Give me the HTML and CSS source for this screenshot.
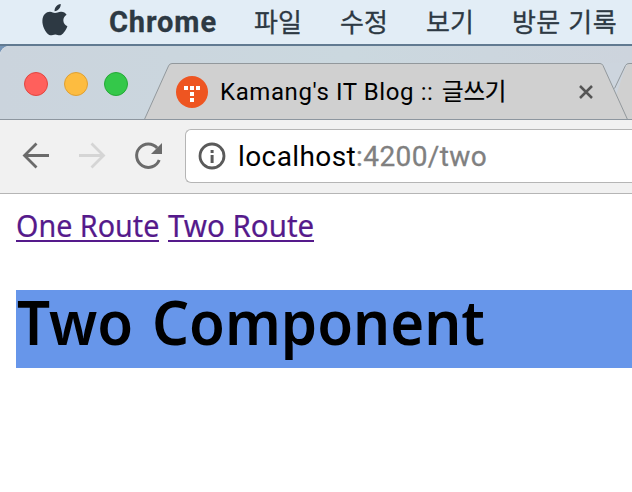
FILE: index.html
```html
<!DOCTYPE html>
<html lang="ko">
<head>
<meta charset="utf-8">
<title>Two Route</title>
<link rel="stylesheet" href="styles.css">
</head>
<body>
<nav class="menubar">
  <svg class="apple" width="28" height="34" viewBox="0 0 28 34"><path d="M13.6 9.2C13.3 5.8 16 2.5 19.7 2C20.1 5.6 17.1 9 13.6 9.2Z M14 11.1C16 11 17.6 9.6 20.4 9.8C22.6 9.9 24.4 10.9 25.6 12.7C20.8 15.5 21.5 22.1 26.4 24.2C25.3 27.2 22.8 31.4 20.2 33C17.8 34 16.7 32.5 14.3 32.5C11.9 32.5 10.5 34 8.3 33C4.3 30.4 1 23.8 1.4 18.2C1.8 12.6 5.4 9.7 9 9.8C11.1 9.9 12.5 11.1 14 11.1Z"/></svg>
  <span class="menu app">Chrome</span>
  <span class="menu file">파일</span>
  <span class="menu edit">수정</span>
  <span class="menu view">보기</span>
  <span class="menu history">방문 기록</span>
</nav>
<div class="window">
  <header class="tabs">
    <svg class="tab-shapes" width="632" height="74" viewBox="0 0 632 74"><path class="tab" d="M608 74L626 19.500Q627 17.500 629 17.500H640V74Z"/><path class="gap" d="M600 17H628L614.500 43Z"/><path class="edge" d="M614.500 42.500L625.500 19.500Q626.500 17.500 629 17.500H640"/><path class="tab" d="M144.200 74L168.500 20Q169.500 17.500 172 17.500H600Q602 17.500 603 19.500L627.500 73.500Z"/><path class="edge" d="M144.200 74L168.500 20Q169.500 17.500 172 17.500H600Q602 17.500 603 19.500L627.500 73.500"/><path class="base" d="M0 73.500H632"/></svg>
    <div class="lights"><i class="light red"></i><i class="light yellow"></i><i class="light green"></i></div>
    <svg class="favicon" width="32" height="32" viewBox="0 0 32 32"><circle cx="16" cy="16" r="16" fill="#ee5521"/><path fill="#fff" d="M8 10h4v4H8zM14 10h4v4h-4zM20 10h4v4h-4zM14 16h4v4h-4zM14 22h4v4h-4z"/></svg>
    <span class="tab-title">Kamang's IT Blog :: <span class="ko">글쓰기</span></span>
    <svg class="close" width="16" height="16" viewBox="0 0 16 16"><path d="M2 2L14 14M14 2L2 14"/></svg>
  </header>
  <div class="toolbar">
    <svg class="nav-icons" width="185" height="73" viewBox="0 0 185 73"><g fill="none" stroke-width="2.800"><path stroke="#6b6b6b" d="M49 35.500H25M36.500 23.500L24.500 35.500L36.500 47.500"/><path stroke="#d5d5d5" d="M79 35.500H103M91.500 23.500L103.500 35.500L91.500 47.500"/><path stroke="#6b6b6b" stroke-width="3" d="M157.200 28A11.700 11.700 0 1 0 159.200 40"/></g><path fill="#6b6b6b" d="M162 23V34H151Z"/></svg>
    <div class="address">
      <svg class="info" width="28" height="28" viewBox="0 0 28 28"><circle cx="14" cy="14" r="12" fill="none" stroke="#5a5a5a" stroke-width="2.800"/><path fill="#5a5a5a" d="M12.600 8h3v3h-3zM12.600 13h3v8h-3z"/></svg>
      <span class="url">localhost<span class="path">:4200/two</span></span>
    </div>
  </div>
  <main class="page">
    <div class="links"><a class="one" href="#one"><span>One Route</span></a><a class="two" href="#two"><span>Two Route</span></a></div>
    <h1><span>Two Component</span></h1>
  </main>
</div>
</body>
</html>
```
FILE: styles.css
```css
* { box-sizing: border-box; }
body {
  margin: 0;
  width: 632px;
  height: 492px;
  overflow: hidden;
  background: #7695b7;
  font-family: Roboto, "Noto Sans CJK KR", sans-serif;
}
svg { display: block; flex: none; }
.menubar {
  display: flex;
  height: 46px;
  padding-left: 41px;
  background: #e2edf6;
  border-bottom: 2px solid #617a91;
  color: #2d3943;
  white-space: nowrap;
}
.apple { margin-top: 2px; fill: #2d3943; }
.menu {
  flex: none;
  font: 400 26px/42px "Noto Sans CJK KR", sans-serif;
  height: 44px;
  -webkit-text-stroke: 0.300px #2d3943;
}
.history { letter-spacing: 0.400px; }
.app { width: 145px; margin-left: 40px; font: 700 29px/44px Roboto, sans-serif; letter-spacing: 0.900px; }
.file, .edit, .view { width: 86px; }
.window { height: 446px; border-top-left-radius: 9px; overflow: hidden; background: #fff; }
.tabs {
  position: relative;
  display: flex;
  height: 74px;
  background: linear-gradient(90deg, #cbd4dd, #cbd8df 55%, #cdd4dd);
}
.tab-shapes { position: absolute; left: 0; top: 0; }
.tab { fill: #d0d0d0; }
.gap { fill: #cdd5de; }
.edge { fill: none; stroke: #92989c; }
.base { stroke: #8d969f; }
.lights { position: relative; display: flex; gap: 16px; padding: 26px 0 0 24px; width: 176px; }
.light { width: 24px; height: 24px; border-radius: 50%; border: 1px solid; }
.red { background: #ff605c; border-color: #e14640; }
.yellow { background: #fdbc40; border-color: #dfa033; }
.green { background: #34c84a; border-color: #25a937; }
.favicon { position: relative; margin-top: 30px; }
.tab-title {
  position: relative;
  width: 358px;
  margin-left: 12px;
  font-size: 24px;
  line-height: 92px;
  height: 74px;
  white-space: nowrap;
  letter-spacing: 0.600px;
}
.ko { margin-left: 2px; font: 400 23.500px/20px "Noto Sans CJK KR", sans-serif; letter-spacing: -0.200px; -webkit-text-stroke: 0.200px #000; }
.close { position: relative; margin-top: 38px; fill: none; stroke: #555; stroke-width: 2.500; }
.toolbar {
  display: flex;
  height: 74px;
  background: #f1f1f1;
  border-bottom: 1px solid #b5b5b5;
}
.address {
  display: flex;
  flex: 1;
  align-items: center;
  height: 54px;
  margin-top: 9px;
  padding-left: 12px;
  border: 1px solid #b5b5b5;
  border-right: 0;
  border-radius: 6px 0 0 6px;
  background: #fff;
}
.url { margin-left: 12px; padding-top: 2px; font-size: 28px; line-height: 52px; white-space: nowrap; letter-spacing: 0.400px; }
.path { color: #808080; -webkit-text-stroke: 0.300px #808080; }
.page { padding: 10px 0 0 16px; font-family: "Noto Sans", sans-serif; }
.links { display: flex; gap: 8.500px; height: 86px; }
.links a {
  height: 38px;
  font-size: 30px;
  line-height: 43px;
  color: #551a8b;
  text-decoration: none;
  border-bottom: 2px solid #551a8b;
  white-space: nowrap;
  -webkit-text-stroke: 0.200px #551a8b;
}
.links .one { width: 143px; }
.links .two { width: 146px; }
.links span, h1 span {
  display: inline-block;
  transform: scaleX(0.957);
  transform-origin: left;
}
.links .two span { transform: scaleX(0.983); }
h1 {
  margin: 0;
  height: 78px;
  font-size: 62px;
  font-weight: 600;
  line-height: 62px;
  background: #6796ea;
}
h1 span { word-spacing: 4px; transform: translateX(1px) scaleX(0.938); }
```
